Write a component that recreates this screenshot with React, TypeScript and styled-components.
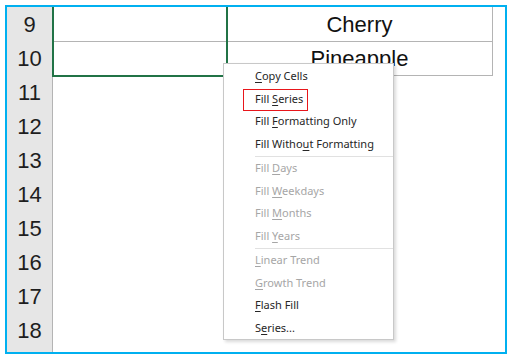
import styled, { createGlobalStyle } from 'styled-components'

const GlobalStyle = createGlobalStyle`
  html, body {
    margin: 0;
    padding: 0;
    background: #ffffff;
  }
`

const Frame = styled.div`
  position: relative;
  margin: 5px;
  width: 498px;
  height: 345px;
  border: 2px solid #00b0f0;
  overflow: hidden;
  background: #ffffff;
  font-family: "Liberation Sans", Arial, sans-serif;
`

const Row = styled.div`
  display: flex;
  height: 34px;
`

const RowHead = styled.div`
  width: 45px;
  height: 33px;
  flex: none;
  display: flex;
  align-items: center;
  justify-content: center;
  padding-top: 1px;
  background: #e6e6e6;
  border-right: 1px solid #b4b4b4;
  border-bottom: 1px solid #c4c4c4;
  color: #1e1e1e;
  font-size: 22px;
`

const Cell = styled.div<{ $width: number; $lined?: boolean }>`
  width: ${p => p.$width}px;
  height: 33px;
  flex: none;
  display: flex;
  align-items: center;
  justify-content: center;
  padding-top: 1px;
  border-bottom: 1px solid ${p => (p.$lined ? '#b4b4b4' : 'transparent')};
  border-right: 1px solid ${p => (p.$lined ? '#b4b4b4' : 'transparent')};
  color: #111;
  font-size: 22px;
`

const Selection = styled.div`
  position: absolute;
  left: 45px;
  top: -2px;
  width: 172px;
  height: 68px;
  border: 2px solid #217346;
  pointer-events: none;
`

const Menu = styled.div`
  position: absolute;
  left: 216px;
  top: 56px;
  width: 169px;
  padding-top: 1px;
  background: #ffffff;
  border: 1px solid #c8c8c8;
  box-shadow: 2px 2px 3px rgba(0, 0, 0, 0.15);
  font-family: "Noto Sans", "Open Sans", sans-serif;
  font-size: 11px;
`

const Item = styled.div<{ $disabled?: boolean; $marked?: boolean }>`
  position: relative;
  height: 22.5px;
  line-height: 22.5px;
  padding-left: 31px;
  color: ${p => (p.$disabled ? '#a6a6a6' : '#262626')};
  white-space: nowrap;

  ${p =>
    p.$marked &&
    `
    &::after {
      content: '';
      position: absolute;
      left: 19px;
      top: 1px;
      width: 63px;
      height: 20px;
      border: 1px solid #e8161b;
    }
  `}
`

const Key = styled.span`
  text-decoration: underline;
  text-underline-offset: 2px;
`

const Separator = styled.div`
  height: 1px;
  margin: 1px 0 0 31px;
  background: #e1e1e1;
`

// row 19 is only partly visible: its number lies below the frame edge
const rows = [9, 10, 11, 12, 13, 14, 15, 16, 17, 18, 19]
const fruits: Record<number, string> = { 9: 'Cherry', 10: 'Pineapple' }

const App = () => {
  return (
    <>
      <GlobalStyle />
      <Frame>
        {rows.map(n => (
          <Row key={n}>
            <RowHead>{n < 19 ? n : ''}</RowHead>
            <Cell $width={173} $lined={n < 11} />
            <Cell $width={265} $lined={n < 11}>
              {fruits[n]}
            </Cell>
          </Row>
        ))}
        <Selection />
        <Menu>
          <Item>
            <Key>C</Key>opy Cells
          </Item>
          <Item $marked>
            Fill <Key>S</Key>eries
          </Item>
          <Item>
            Fill <Key>F</Key>ormatting Only
          </Item>
          <Item>
            Fill Witho<Key>u</Key>t Formatting
          </Item>
          <Separator />
          <Item $disabled>
            Fill <Key>D</Key>ays
          </Item>
          <Item $disabled>
            Fill <Key>W</Key>eekdays
          </Item>
          <Item $disabled>
            Fill <Key>M</Key>onths
          </Item>
          <Item $disabled>
            Fill <Key>Y</Key>ears
          </Item>
          <Separator />
          <Item $disabled>
            <Key>L</Key>inear Trend
          </Item>
          <Item $disabled>
            <Key>G</Key>rowth Trend
          </Item>
          <Item>
            <Key>F</Key>lash Fill
          </Item>
          <Item>
            S<Key>e</Key>ries...
          </Item>
        </Menu>
      </Frame>
    </>
  )
}

export default App
